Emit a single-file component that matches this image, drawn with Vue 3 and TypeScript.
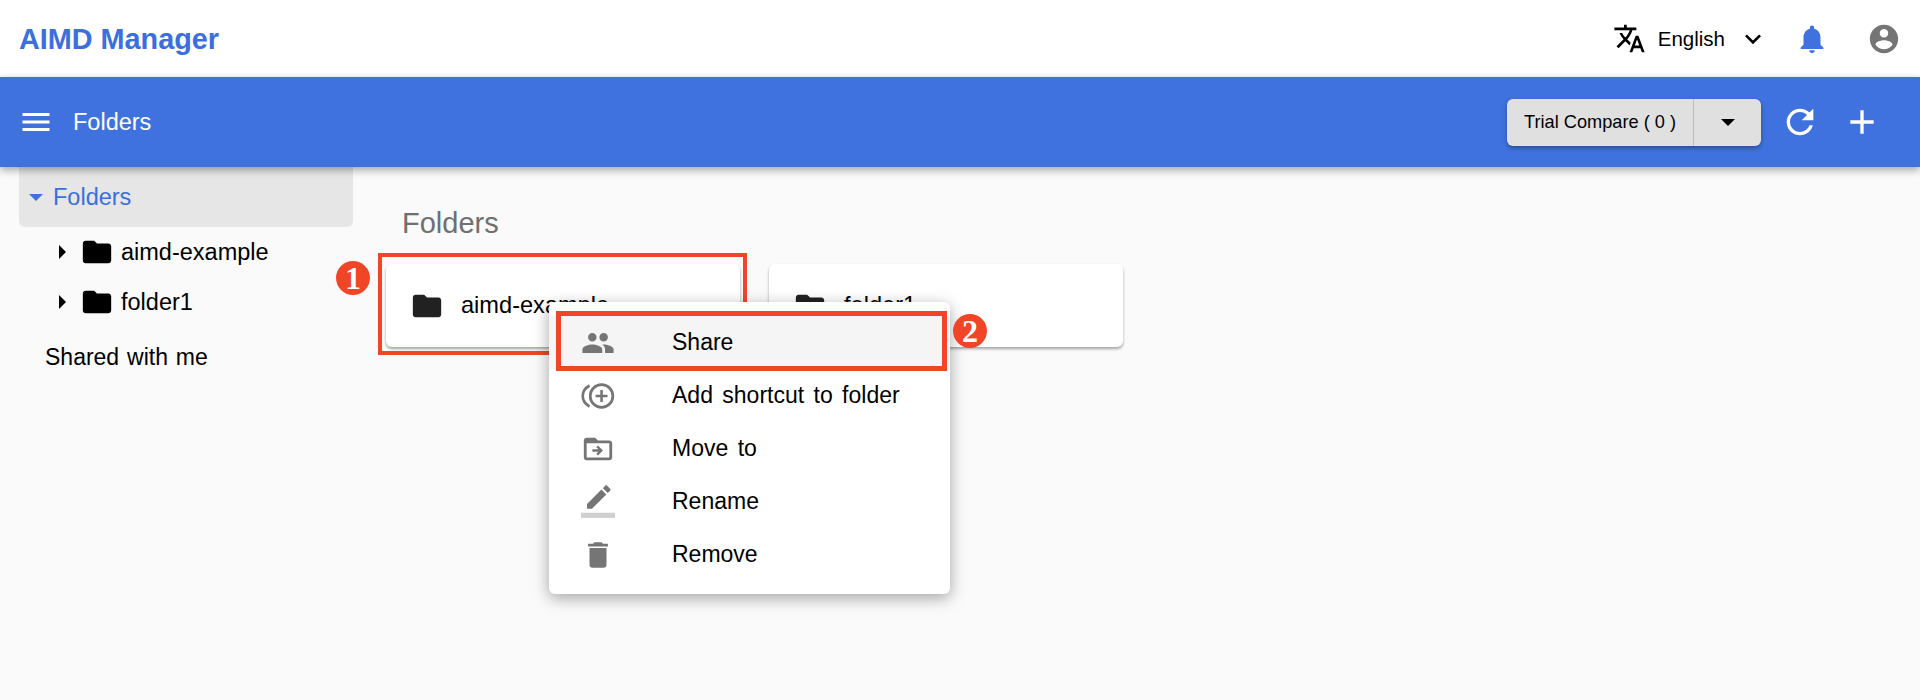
<script setup lang="ts">
interface MenuItem {
  label: string
  icon: string
}

const menuItems: MenuItem[] = [
  { label: 'Share', icon: 'people' },
  { label: 'Add shortcut to folder', icon: 'shortcut' },
  { label: 'Move to', icon: 'move' },
  { label: 'Rename', icon: 'rename' },
  { label: 'Remove', icon: 'remove' },
]

const folderPath =
  'M10 4H4c-1.1 0-1.99.9-1.99 2L2 18c0 1.1.9 2 2 2h16c1.1 0 2-.9 2-2V8c0-1.1-.9-2-2-2h-8l-2-2z'
const treeFolders = ['aimd-example', 'folder1']
</script>

<template>
  <div class="page">
    <header class="topbar">
      <span class="brand">AIMD Manager</span>
      <div class="top-actions">
        <svg class="translate-icon" viewBox="0 0 24 24">
          <path d="M12.87 15.07l-2.54-2.51.03-.03c1.74-1.94 2.98-4.17 3.71-6.53H17V4h-7V2H8v2H1v1.99h11.17C11.5 7.92 10.44 9.75 9 11.35 8.07 10.32 7.3 9.19 6.69 8h-2c.73 1.63 1.73 3.17 2.98 4.56l-5.09 5.02L4 19l5-5 3.11 3.11.76-2.04zM18.5 10h-2L12 22h2l1.12-3h4.75L21 22h2l-4.5-12zm-2.62 7l1.62-4.33L19.12 17h-3.24z" />
        </svg>
        <span class="lang">English</span>
        <svg class="chevron" viewBox="0 0 24 24">
          <path d="M7.41 8.59L12 13.17l4.59-4.58L18 10l-6 6-6-6z" />
        </svg>
        <svg class="bell" viewBox="0 0 24 24">
          <path d="M12 22c1.1 0 2-.9 2-2h-4c0 1.1.89 2 2 2zm6-6v-5c0-3.07-1.64-5.64-4.5-6.32V4c0-.83-.67-1.5-1.5-1.5s-1.5.67-1.5 1.5v.68C7.63 5.36 6 7.92 6 11v5l-2 2v1h16v-1l-2-2z" />
        </svg>
        <svg class="account" viewBox="0 0 24 24">
          <path d="M12 2C6.48 2 2 6.48 2 12s4.48 10 10 10 10-4.48 10-10S17.52 2 12 2zm0 3c1.66 0 3 1.34 3 3s-1.34 3-3 3-3-1.34-3-3 1.34-3 3-3zm0 14.2c-2.5 0-4.71-1.28-6-3.22.03-1.99 4-3.08 6-3.08 1.99 0 5.97 1.09 6 3.08-1.29 1.94-3.5 3.22-6 3.22z" />
        </svg>
      </div>
    </header>

    <div class="toolbar">
      <svg class="menu-icon" viewBox="0 0 24 24">
        <path d="M3 18h18v-2H3v2zm0-5h18v-2H3v2zm0-7v2h18V6H3z" />
      </svg>
      <span class="toolbar-title">Folders</span>
      <div class="compare">
        <span class="compare-label">Trial Compare ( 0 )</span>
        <span class="compare-drop"><i class="caret"></i></span>
      </div>
      <svg class="tool-icon refresh" viewBox="0 0 24 24">
        <path d="M17.65 6.35C16.2 4.9 14.21 4 12 4c-4.42 0-7.99 3.58-7.99 8s3.57 8 7.99 8c3.73 0 6.84-2.55 7.73-6h-2.08c-.82 2.33-3.04 4-5.65 4-3.31 0-6-2.69-6-6s2.69-6 6-6c1.66 0 3.14.69 4.22 1.78L13 11h7V4l-2.35 2.35z" />
      </svg>
      <svg class="tool-icon plus" viewBox="0 0 24 24">
        <path d="M19 13h-6v6h-2v-6H5v-2h6V5h2v6h6v2z" />
      </svg>
    </div>

    <div class="body">
      <aside class="sidebar">
        <div class="tree-root"><i class="tree-caret"></i>Folders</div>
        <div v-for="name in treeFolders" :key="name" class="tree-item">
          <i class="tree-arrow"></i>
          <svg class="tree-folder" viewBox="0 0 24 24"><path :d="folderPath" /></svg>
          <span>{{ name }}</span>
        </div>
        <div class="shared">Shared with me</div>
      </aside>

      <main class="content">
        <h2 class="section-title">Folders</h2>
        <div class="cards">
          <div v-for="name in treeFolders" :key="name" class="card">
            <svg class="card-folder" viewBox="0 0 24 24"><path :d="folderPath" /></svg>
            <span>{{ name }}</span>
          </div>
        </div>
      </main>
    </div>

    <div class="mark mark-card"></div>
    <span class="badge badge-one">1</span>

    <div class="context-menu">
      <div
        v-for="item in menuItems"
        :key="item.label"
        :class="['menu-row', item.icon === 'people' ? 'active' : '']"
      >
        <svg class="menu-row-icon" viewBox="0 0 24 24">
          <path v-if="item.icon === 'people'" d="M16 11c1.66 0 2.99-1.34 2.99-3S17.66 5 16 5c-1.66 0-3 1.34-3 3s1.34 3 3 3zm-8 0c1.66 0 2.99-1.34 2.99-3S9.66 5 8 5C6.34 5 5 6.34 5 8s1.34 3 3 3zm0 2c-2.33 0-7 1.17-7 3.5V19h14v-2.5c0-2.33-4.67-3.5-7-3.5zm8 0c-.29 0-.62.02-.97.05 1.16.84 1.97 1.97 1.97 3.45V19h6v-2.5c0-2.33-4.67-3.5-7-3.5z" />
          <template v-else-if="item.icon === 'shortcut'">
            <circle cx="14.5" cy="12" r="8" fill="none" stroke="#757575" stroke-width="1.9" />
            <path d="M13.6 7.8h1.8v3.3h3.3v1.8h-3.3v3.3h-1.8v-3.3h-3.3v-1.8h3.3z" />
            <path d="M6 4.6C3.2 6.2 1.2 8.9 1.2 12s2 5.8 4.8 7.4" fill="none" stroke="#757575" stroke-width="1.9" />
          </template>
          <path v-else-if="item.icon === 'move'" d="M20 6h-8l-2-2H4c-1.1 0-1.99.9-1.99 2L2 18c0 1.1.9 2 2 2h16c1.1 0 2-.9 2-2V8c0-1.1-.9-2-2-2zm0 12H4V8h16v10zM12 9.5l-1.2 1.2 1.4 1.4H8v1.8h4.2l-1.4 1.4 1.2 1.2 3.5-3.5z" />
          <template v-else-if="item.icon === 'rename'">
            <path d="M3 17.25V21h3.75L17.81 9.94l-3.75-3.75L3 17.25zM20.71 7.04c.39-.39.39-1.02 0-1.41l-2.34-2.34c-.39-.39-1.02-.39-1.41 0l-1.83 1.83 3.75 3.75 1.83-1.83z" transform="translate(1.5 -2.5) scale(.92)" />
            <rect x="0" y="19.6" width="24" height="3.6" fill="#cfcfcf" />
          </template>
          <path v-else d="M6 19c0 1.1.9 2 2 2h8c1.1 0 2-.9 2-2V7H6v12zM19 4h-3.5l-1-1h-5l-1 1H5v2h14V4z" />
        </svg>
        <span>{{ item.label }}</span>
      </div>
    </div>

    <div class="mark mark-share"></div>
    <span class="badge badge-two">2</span>
  </div>
</template>

<style scoped>
.page {
  position: relative;
  height: 700px;
  overflow: hidden;
  background: #fafafa;
  color: #000;
  font-family: 'Liberation Sans', Arial, sans-serif;
}

svg {
  display: block;
  flex: none;
}

.topbar {
  height: 77px;
  display: flex;
  align-items: center;
  justify-content: space-between;
  padding: 0 19px;
  box-sizing: border-box;
  background: #fff;
}

.brand {
  padding-top: 2px;
  font-size: 28.8px;
  font-weight: 700;
  color: #3b6fdd;
}

.top-actions {
  display: flex;
  align-items: center;
}

.translate-icon {
  width: 33px;
  height: 33px;
  margin-right: 12px;
}

.lang {
  padding-top: 1px;
  font-size: 20.5px;
}

.chevron {
  width: 32px;
  height: 32px;
  margin-left: 12px;
}

.bell {
  width: 34px;
  height: 34px;
  margin-left: 26px;
  fill: #3f72de;
}

.account {
  width: 34px;
  height: 34px;
  margin-left: 38px;
  fill: #757575;
}

.toolbar {
  position: relative;
  z-index: 1;
  height: 90px;
  display: flex;
  align-items: center;
  padding: 0 38px 0 18px;
  box-sizing: border-box;
  background: #3f72de;
  box-shadow: 0 3px 8px rgba(0, 0, 0, 0.35);
  color: #fff;
}

.menu-icon {
  width: 36px;
  height: 36px;
  fill: #fff;
  margin-right: 19px;
}

.toolbar-title {
  font-size: 23.5px;
}

.compare {
  margin-left: auto;
  display: flex;
  height: 47px;
  border-radius: 6px;
  background: #e0e0e0;
  color: #000;
  box-shadow: 0 2px 4px rgba(0, 0, 0, 0.35);
}

.compare-label {
  display: flex;
  align-items: center;
  padding: 0 17px;
  font-size: 18.2px;
  border-right: 1px solid #bdbdbd;
}

.compare-drop {
  width: 67px;
  display: flex;
  align-items: center;
  justify-content: center;
}

.caret {
  width: 0;
  height: 0;
  border-left: 7px solid transparent;
  border-right: 7px solid transparent;
  border-top: 7px solid #000;
}

.tool-icon {
  width: 40px;
  height: 40px;
  fill: #fff;
}

.refresh {
  margin-left: 19px;
}

.plus {
  margin-left: 22px;
}

.body {
  display: flex;
}

.sidebar {
  width: 353px;
  padding-left: 19px;
  box-sizing: border-box;
}

.tree-root {
  height: 60px;
  display: flex;
  align-items: center;
  padding-left: 10px;
  background: #e6e6e6;
  border-radius: 0 0 6px 6px;
  color: #3b6fdd;
  font-size: 23.5px;
}

.tree-caret {
  width: 0;
  height: 0;
  margin-right: 10px;
  border-left: 7px solid transparent;
  border-right: 7px solid transparent;
  border-top: 7px solid #3f72de;
}

.tree-item {
  height: 50px;
  display: flex;
  align-items: center;
  padding-left: 40px;
  font-size: 23.5px;
}

.tree-arrow {
  width: 0;
  height: 0;
  margin-right: 14px;
  border-top: 7px solid transparent;
  border-bottom: 7px solid transparent;
  border-left: 7px solid #000;
}

.tree-folder {
  width: 34px;
  height: 34px;
  margin-right: 7px;
}

.shared {
  margin-top: 17px;
  padding-left: 26px;
  font-size: 23px;
  word-spacing: 1.5px;
}

.content {
  flex: 1;
  padding: 38px 0 0 33px;
}

.section-title {
  margin: 0 0 23px 16px;
  font-size: 29px;
  font-weight: 400;
  line-height: 36px;
  color: #6f6f6f;
}

.cards {
  display: flex;
  gap: 29px;
}

.card {
  width: 354px;
  height: 83px;
  display: flex;
  align-items: center;
  padding-left: 24px;
  box-sizing: border-box;
  background: #fff;
  border-radius: 6px;
  box-shadow: 0 2px 3px rgba(0, 0, 0, 0.35);
  font-size: 23.6px;
}

.card-folder {
  width: 34px;
  height: 34px;
  fill: #212121;
  margin-right: 17px;
}

.context-menu {
  position: absolute;
  left: 549px;
  top: 302px;
  width: 401px;
  height: 292px;
  box-sizing: border-box;
  padding-top: 14px;
  background: #fff;
  border-radius: 6px;
  box-shadow: 0 4px 16px rgba(0, 0, 0, 0.35);
}

.menu-row {
  height: 53px;
  display: flex;
  align-items: center;
  padding-left: 32px;
  font-size: 23px;
  word-spacing: 3px;
}

.menu-row.active {
  background: #f5f5f5;
}

.menu-row-icon {
  width: 34px;
  height: 34px;
  margin-right: 57px;
  fill: #757575;
}

.mark {
  position: absolute;
  box-sizing: border-box;
  border: 5px solid #f04527;
}

.mark-card {
  left: 378px;
  top: 253px;
  width: 369px;
  height: 102px;
  border-width: 4px;
}

.mark-share {
  left: 556px;
  top: 311px;
  width: 391px;
  height: 60px;
}

.badge {
  position: absolute;
  width: 34px;
  height: 34px;
  border-radius: 50%;
  display: flex;
  align-items: center;
  justify-content: center;
  background: #f04527;
  color: #fff;
  font-family: 'Liberation Serif', serif;
  font-size: 32px;
  font-weight: 700;
}

.badge-one {
  left: 336px;
  top: 261px;
}

.badge-two {
  left: 953px;
  top: 314px;
}
</style>

<style>
body {
  margin: 0;
}
</style>
